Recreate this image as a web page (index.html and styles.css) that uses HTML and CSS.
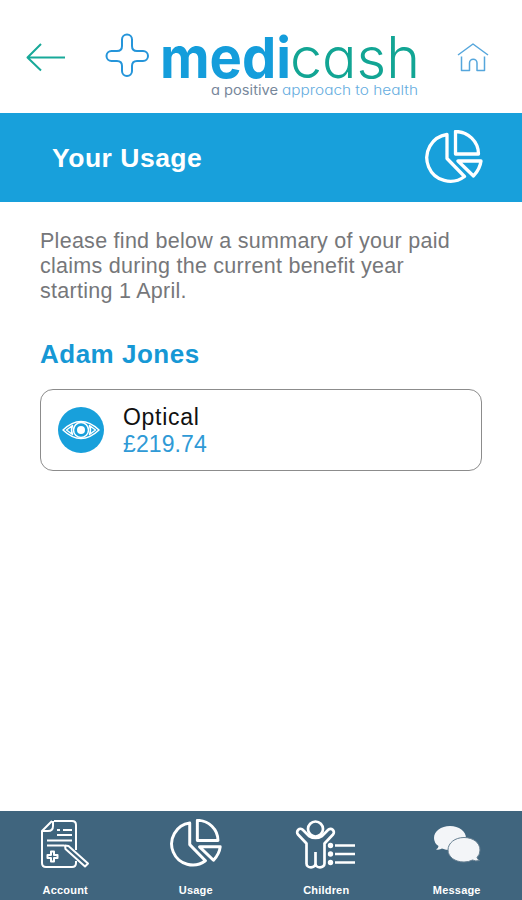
FILE: index.html
```html
<!DOCTYPE html>
<html lang="en">
<head>
  <meta charset="UTF-8" />
  <meta name="viewport" content="width=device-width, initial-scale=1.0"/>
  <title>Medicash - Your Usage</title>
  <link rel="stylesheet" href="styles.css">
</head>
<body>
  <header class="topbar">
    <svg class="back" viewBox="0 0 40 30" width="40" height="30">
      <path d="M39 15.5H2M15 2L1.5 15.5L15 28.5" />
    </svg>
    <svg class="logo" viewBox="0 0 316 70" width="316" height="70">
      <path class="cross" d="M22 2.500a5 5 0 0 1 5 5V14q0 5 5 5H38a5 5 0 0 1 0 10H32q-5 0-5 5V39a5 5 0 0 1-10 0V34q0-5-5-5H6.500a5 5 0 0 1 0-10H12q5 0 5-5V7.500a5 5 0 0 1 5-5z" />
      <text class="medi" x="55" y="45.500" textLength="131" lengthAdjust="spacingAndGlyphs">medi</text>
      <text class="cash" x="185" y="45.500" textLength="130" lengthAdjust="spacingAndGlyphs">cash</text>
      <text class="tag tag-grey" x="106" y="63" textLength="67" lengthAdjust="spacingAndGlyphs">a positive</text>
      <text class="tag tag-blue" x="177" y="63" textLength="136" lengthAdjust="spacingAndGlyphs">approach to health</text>
    </svg>
    <svg class="home" viewBox="0 0 32 30" width="32" height="30">
      <path d="M1 13L16 2L31 13M4.500 14.500V28.500H12.500V21a3.700 3.700 0 0 1 7.500 0V28.500H27.500V14.500" />
    </svg>
  </header>

  <section class="banner">
    <h1>Your Usage</h1>
    <svg class="pie" viewBox="0 0 58 54" width="58" height="54">
      <path d="M22 4.500A23.500 23.500 0 1 0 39.500 46.500L22 28.500zM30.500 1.500A23 22.500 0 0 1 53.500 24H30.500zM33 31H56Q55 39 48.500 46z" />
    </svg>
  </section>

  <main>
    <p class="intro">
      <span>Please find below a summary of your paid</span><br />
      <span>claims during the current benefit year</span><br />
      <span>starting 1 April.</span>
    </p>
    <h2>Adam Jones</h2>
    <div class="claim">
      <svg class="eye" viewBox="0 0 46 46" width="46" height="46">
        <circle class="disc" cx="23" cy="23" r="23" />
        <path d="M5 23Q23 6 41 23Q23 40 5 23zM14.500 18.500L8.500 23L14.500 27.500Q12.500 23 14.500 18.500zM31.500 18.500L37.500 23L31.500 27.500Q33.500 23 31.500 18.500z" />
        <circle cx="23" cy="23" r="7.500" />
        <circle class="pupil" cx="23" cy="23" r="4" />
      </svg>
      <div>
        <p class="name">Optical</p>
        <p class="amount">£219.74</p>
      </div>
    </div>
  </main>

  <nav>
    <a class="account">
      <svg viewBox="0 0 50 50" width="50" height="50">
        <path d="M14 2H32Q36 2 36 6V31M36 42V44Q36 48 32 48H6Q2 48 2 44V12L12 2M2 12H8Q13 12 13 7V2M17 11H20M23 11H32M17 16H32M7 21.500H32M7 26.500H24" />
        <path d="M11 32.500h3v3.500h3.500v3h-3.500v3.500h-3v-3.500h-3.500v-3h3.500z" />
        <path d="M25 26.500L28.500 27L48 44.500L45 47.500L25.500 30z" />
      </svg>
      <span>Account</span>
    </a>
    <a class="usage">
      <svg class="pie" viewBox="0 0 58 54" width="52" height="48.500">
        <path d="M22 4.500A23.500 23.500 0 1 0 39.500 46.500L22 28.500zM30.500 1.500A23 22.500 0 0 1 53.500 24H30.500zM33 31H56Q55 39 48.500 46z" />
      </svg>
      <span>Usage</span>
    </a>
    <a class="children">
      <svg viewBox="0 0 62 50" width="62" height="50">
        <circle cx="20.500" cy="10" r="7.500" />
        <path d="M14 17L8 11A3.200 3.200 0 0 0 3 15.500L11.500 24.500V44.500a4 3.500 0 0 0 9 0a4 3.500 0 0 0 9 0V24.500L38 15.500A3.200 3.200 0 0 0 33 11L27 17Q20.500 21 14 17zM20.500 33V45M40 26.500H60M40 35H60M40 43.500H60" />
        <g class="dots"><circle cx="35.500" cy="26.500" r="2.700" /><circle cx="35.500" cy="35" r="2.700" /><circle cx="35.500" cy="43.500" r="2.700" /></g>
      </svg>
      <span>Children</span>
    </a>
    <a class="message">
      <svg viewBox="0 0 48 38" width="48" height="38">
        <path d="M17 1C26 1 33 6 33 13S26 25 17 25Q13 25 9 23.500Q7 25 3 24.500Q5.500 23 5.500 21Q1 18 1 13C1 6 8 1 17 1z" />
        <path class="front" d="M31 12.500C40 12.500 47 17.500 47 25Q47 29.500 44 32.500Q44.500 34.500 46.500 35.500Q42.500 36.500 39.500 35Q35.500 37 31 37C22 37 15 32 15 25S22 12.500 31 12.500z" />
      </svg>
      <span>Message</span>
    </a>
  </nav>
</body>
</html>
```
FILE: styles.css
```css
* {
  box-sizing: border-box;
}

body {
  margin: 0;
  height: 900px;
  display: flex;
  flex-direction: column;
  background: #fff;
  font-family: "Liberation Sans", Arial, sans-serif;
  overflow: hidden;
}

h1, h2, p {
  margin: 0;
}

svg {
  display: block;
  fill: none;
  stroke: #fff;
  stroke-width: 2;
  stroke-linejoin: round;
}

/* Header */
.topbar {
  height: 113px;
  display: flex;
  align-items: flex-start;
  padding-left: 26px;
}

.back {
  margin-top: 42px;
  stroke: #18a999;
}

.logo {
  margin: 32px 0 0 39px;
  overflow: visible;
}

.logo text {
  stroke: none;
  font-family: Inter, sans-serif;
  font-feature-settings: "cv11";
}

.logo .cross {
  stroke: #2595da;
}

.logo .medi {
  fill: #149ddb;
  font-size: 57px;
  font-weight: 700;
}

.logo .cash {
  fill: #12a594;
  font-size: 57px;
  font-weight: 350;
}

.logo .tag {
  font-size: 13px;
}

.logo .tag-grey {
  fill: #77879b;
}

.logo .tag-blue {
  fill: #65ade0;
  font-weight: 300;
}

.home {
  margin: 42px 0 0 36px;
  stroke: #55a6dc;
  stroke-width: 1.5;
}

/* Title banner */
.banner {
  height: 89px;
  display: flex;
  align-items: center;
  justify-content: space-between;
  padding: 0 39px 0 52px;
  background: #18a0db;
}

.banner h1 {
  padding-top: 2px;
  color: #fff;
  font-size: 26.5px;
  letter-spacing: 0.5px;
}

.banner .pie {
  margin-top: -2px;
}

.pie {
  stroke-width: 3.3;
}

/* Content */
main {
  flex: 1;
  padding: 27px 40px 0;
}

.intro {
  color: #76777a;
  font-size: 21.5px;
  line-height: 25px;
  letter-spacing: 0.27px;
  white-space: nowrap;
}

main h2 {
  margin-top: 34px;
  color: #1698d5;
  font-size: 26px;
  line-height: 32px;
  letter-spacing: 0.5px;
}

.claim {
  display: flex;
  align-items: center;
  gap: 19px;
  height: 82px;
  margin-top: 19px;
  padding-left: 17px;
  border: 1px solid #8c8c8c;
  border-radius: 13px;
}

.claim div {
  padding-top: 1px;
}

.claim p {
  font-size: 23px;
  line-height: 27px;
}

.claim .name {
  color: #111;
  letter-spacing: 0.7px;
}

.claim .amount {
  color: #2f9ad6;
  letter-spacing: 0.1px;
}

.eye {
  stroke-width: 1.5;
}

.eye .disc {
  fill: #18a0db;
  stroke: none;
}

.eye .pupil {
  fill: #fff;
  stroke: none;
}

/* Bottom navigation */
nav {
  display: grid;
  grid-template-columns: repeat(4, 1fr);
  height: 89px;
  background: #40657e;
}

nav a {
  display: flex;
  flex-direction: column;
  align-items: center;
  justify-content: space-between;
  padding: 8px 0 3px;
  color: #fff;
  font-size: 11px;
  font-weight: bold;
  line-height: 13px;
  letter-spacing: 0.2px;
}

.children svg {
  stroke-width: 2.7;
}

.children .dots {
  fill: #fff;
  stroke: none;
}

.message svg {
  margin-top: 6px;
  fill: #f3f5f8;
  stroke: none;
}

.message .front {
  stroke: #667f91;
  stroke-width: 1;
}
```
